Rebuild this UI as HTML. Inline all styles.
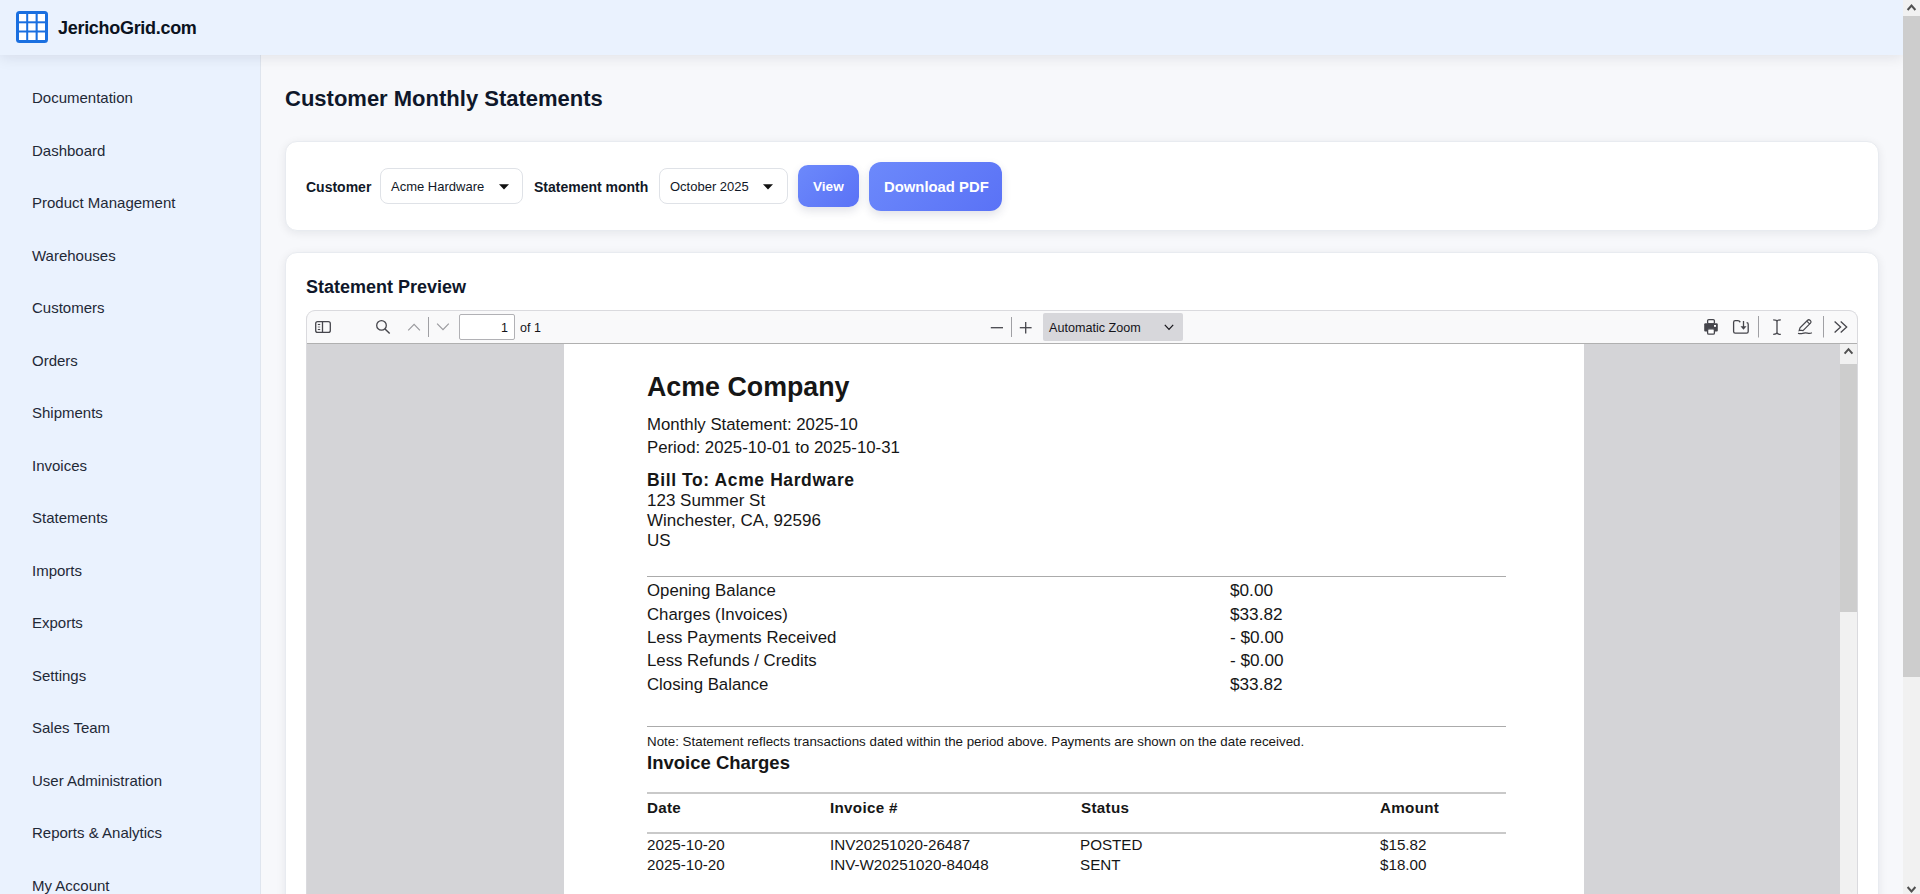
<!DOCTYPE html>
<html><head><meta charset="utf-8">
<style>
*{box-sizing:border-box;margin:0;padding:0}
html,body{width:1920px;height:894px;overflow:hidden}
body{font-family:"Liberation Sans",sans-serif;background:#f7f8fb;position:relative;color:#111827}
.a{position:absolute;white-space:nowrap;line-height:1}
#header{position:absolute;left:0;top:0;width:1903px;height:55px;background:#eaf2fe;z-index:5;box-shadow:0 2px 14px rgba(15,23,42,0.10)}
#sidebar{position:absolute;left:0;top:55px;width:261px;height:839px;background:#eaf2fe;border-right:1px solid #dfe5ee;z-index:2}
.nav{position:absolute;left:32px;font-size:15px;color:#1f2937;line-height:1}
#main{position:absolute;left:261px;top:55px;width:1642px;height:839px;overflow:hidden}
.card{position:absolute;background:#fff;border:1px solid #e8ebf0;border-radius:12px;box-shadow:0 2px 10px rgba(15,23,42,0.08)}
.lbl{font-weight:bold;font-size:14px;color:#111827}
.sel{position:absolute;border:1px solid #dfe2e7;border-radius:8px;background:#fff}
.tri{position:absolute;width:0;height:0;border-left:5px solid transparent;border-right:5px solid transparent;border-top:5px solid #111}
.btn{position:absolute;border-radius:10px;background:linear-gradient(135deg,#6c89fb,#5a72f6);box-shadow:0 4px 10px rgba(40,50,90,0.14)}
#sbar{position:absolute;left:1903px;top:0;width:17px;height:894px;background:#f1f1f1;z-index:10}
.pdf{color:#161616}
.rule{position:absolute;left:647px;width:859px;height:1px;background:#ababab}
</style></head><body>

<div id="header">
  <svg class="a" style="left:16px;top:11px" width="32" height="32" viewBox="0 0 32 32">
    <rect x="0" y="0" width="32" height="32" rx="3.5" fill="#1a6fe0"/>
    <g fill="#fff">
      <rect x="3" y="3" width="7.2" height="7.3"/><rect x="12.2" y="3" width="7.4" height="7.3"/><rect x="21.7" y="3" width="7.3" height="7.3"/>
      <rect x="3" y="12.3" width="7.2" height="7.2"/><rect x="12.2" y="12.3" width="7.4" height="7.2"/><rect x="21.7" y="12.3" width="7.3" height="7.2"/>
      <rect x="3" y="21.5" width="7.2" height="7.5"/><rect x="12.2" y="21.5" width="7.4" height="7.5"/><rect x="21.7" y="21.5" width="7.3" height="7.5"/>
    </g>
  </svg>
  <div class="a" style="left:58px;top:19px;font-size:18px;font-weight:bold;letter-spacing:-0.3px;color:#0b1220">JerichoGrid.com</div>
</div>

<div id="sidebar"></div>
<div class="a nav" style="top:90px;z-index:3">Documentation</div>
<div class="a nav" style="top:143px;z-index:3">Dashboard</div>
<div class="a nav" style="top:195px;z-index:3">Product Management</div>
<div class="a nav" style="top:248px;z-index:3">Warehouses</div>
<div class="a nav" style="top:300px;z-index:3">Customers</div>
<div class="a nav" style="top:353px;z-index:3">Orders</div>
<div class="a nav" style="top:405px;z-index:3">Shipments</div>
<div class="a nav" style="top:458px;z-index:3">Invoices</div>
<div class="a nav" style="top:510px;z-index:3">Statements</div>
<div class="a nav" style="top:563px;z-index:3">Imports</div>
<div class="a nav" style="top:615px;z-index:3">Exports</div>
<div class="a nav" style="top:668px;z-index:3">Settings</div>
<div class="a nav" style="top:720px;z-index:3">Sales Team</div>
<div class="a nav" style="top:773px;z-index:3">User Administration</div>
<div class="a nav" style="top:825px;z-index:3">Reports &amp; Analytics</div>
<div class="a nav" style="top:878px;z-index:3">My Account</div>

<!-- main title -->
<div class="a" style="left:285px;top:88px;font-size:22px;font-weight:bold;color:#0f172a">Customer Monthly Statements</div>

<!-- card 1 -->
<div class="card" style="left:285px;top:141px;width:1594px;height:90px"></div>
<div class="a lbl" style="left:306px;top:180px">Customer</div>
<div class="sel" style="left:380px;top:168px;width:143px;height:36px"></div>
<div class="a" style="left:391px;top:180px;font-size:13px;color:#111827">Acme Hardware</div>
<svg class="a" style="left:495px;top:180px" width="18" height="14" viewBox="495 180 18 14"><polygon points="499,184.2 509,184.2 504,189.6" fill="#111"/></svg>
<div class="a lbl" style="left:534px;top:180px">Statement month</div>
<div class="sel" style="left:659px;top:168px;width:129px;height:36px"></div>
<div class="a" style="left:670px;top:180px;font-size:13px;color:#111827">October 2025</div>
<svg class="a" style="left:759px;top:180px" width="18" height="14" viewBox="759 180 18 14"><polygon points="763,184.2 773,184.2 768,189.6" fill="#111"/></svg>
<div class="btn" style="left:798px;top:165px;width:61px;height:42px"></div>
<div class="a" style="left:813px;top:180px;font-size:13.6px;font-weight:bold;color:#fff">View</div>
<div class="btn" style="left:869px;top:162px;width:133px;height:49px;border-radius:12px"></div>
<div class="a" style="left:884px;top:180px;font-size:14.85px;font-weight:bold;color:#fff">Download PDF</div>

<!-- card 2 -->
<div class="card" style="left:285px;top:252px;width:1594px;height:700px"></div>
<div class="a" style="left:306px;top:278px;font-size:18px;font-weight:bold;color:#0f172a">Statement Preview</div>

<!-- pdf viewer -->
<div id="viewer" style="position:absolute;left:306px;top:310px;width:1552px;height:600px;border:1px solid #dadade;border-bottom:none;border-radius:9px 9px 0 0;overflow:hidden;background:#d4d4d7">
  <div style="position:absolute;left:0;top:0;width:100%;height:33px;background:#f9f9fa;border-bottom:1px solid #b0b0b0"></div>
  <div style="position:absolute;left:257px;top:33px;width:1020px;height:600px;background:#fff"></div>
  <div style="position:absolute;left:1533px;top:33px;width:17px;height:600px;background:#f1f1f1">
    <div style="position:absolute;left:0;top:20px;width:17px;height:248px;background:#cdcdcd"></div>
  </div>
</div>
<svg class="a" style="left:306px;top:310px;z-index:4" width="1552" height="60" viewBox="306 310 1552 60" fill="none" stroke="#46464c" stroke-width="1.3">
  <!-- sidebar toggle -->
  <rect x="315.7" y="321.6" width="14.6" height="10.8" rx="2"/>
  <line x1="322.5" y1="321.6" x2="322.5" y2="332.4"/>
  <line x1="317.8" y1="324.5" x2="320.2" y2="324.5" stroke-width="1.1"/>
  <line x1="317.8" y1="327" x2="320.2" y2="327" stroke-width="1.1" stroke="#8a8a8f"/>
  <line x1="317.8" y1="329.5" x2="320.2" y2="329.5" stroke-width="1.1"/>
  <!-- search -->
  <circle cx="381.5" cy="325.4" r="4.8"/>
  <line x1="385" y1="328.9" x2="389.7" y2="333.6" stroke-width="1.4"/>
  <!-- up/down -->
  <polyline points="408.2,330.3 414.1,324.4 419.9,330.3" stroke="#9a9a9e" stroke-width="1.2"/>
  <line x1="428.5" y1="317" x2="428.5" y2="337" stroke="#a0a0a4" stroke-width="1"/>
  <polyline points="437.1,323.7 443,329.6 448.8,323.7" stroke="#9a9a9e" stroke-width="1.2"/>
  <!-- zoom -->
  <line x1="990.8" y1="327.7" x2="1003" y2="327.7" stroke-width="1.3"/>
  <line x1="1011.5" y1="317" x2="1011.5" y2="337" stroke="#a0a0a4" stroke-width="1"/>
  <line x1="1019.8" y1="327.7" x2="1031.6" y2="327.7" stroke-width="1.3"/>
  <line x1="1025.7" y1="321.9" x2="1025.7" y2="333.6" stroke-width="1.3"/>
  <!-- right separators -->
  <line x1="1758.5" y1="316" x2="1758.5" y2="337.5" stroke="#a0a0a4" stroke-width="1"/>
  <line x1="1823.5" y1="316" x2="1823.5" y2="337.5" stroke="#a0a0a4" stroke-width="1"/>
  <!-- print -->
  <rect x="1707.6" y="319.6" width="6.8" height="4.2" rx="1.2"/>
  <path d="M1705.4 323.2 H1716.6 Q1717.8 323.2 1717.8 324.4 V330.6 Q1717.8 331.6 1716.8 331.6 H1705.2 Q1704.2 331.6 1704.2 330.6 V324.4 Q1704.2 323.2 1705.4 323.2 Z" fill="#46464c" stroke="none"/>
  <rect x="1714" y="325" width="2" height="1.8" fill="#fff" stroke="none"/>
  <rect x="1707.6" y="328.8" width="6.8" height="5.4" rx="1.2" fill="#fff"/>
  <!-- save -->
  <path d="M1740.3 322.2 L1739.2 321 Q1738.6 320.6 1737.8 320.6 H1735.2 Q1733.6 320.6 1733.6 322.2 V331.6 Q1733.6 333.2 1735.2 333.2 H1746.6 Q1748.2 333.2 1748.2 331.6 V324.2 Q1748.2 322.6 1746.6 322.6"/>
  <line x1="1743.5" y1="321" x2="1743.5" y2="327" stroke-width="1.3"/>
  <path d="M1740.5 326.3 H1746.5 L1743.5 329.8 Z" fill="#46464c" stroke="none"/>
  <!-- text select -->
  <path d="M1773.2 319.8 Q1777 319.8 1777 321.6 Q1777 319.8 1780.8 319.8 M1777 321.6 V332.6 M1773.2 334.4 Q1777 334.4 1777 332.6 Q1777 334.4 1780.8 334.4" stroke-width="1.3"/>
  <!-- pen -->
  <path d="M1800.2 330.2 L1799.2 330.6 L1800 327.8 L1807.6 320.3 Q1808.8 319.2 1810 320.3 L1810.6 320.9 Q1811.6 322 1810.5 323.1 L1803 330.6 Z M1806.8 321.1 L1809.8 324.1" stroke-width="1.2"/>
  <path d="M1798 333.2 Q1800 334 1802.5 333.4 Q1805 332.6 1807.5 333.2 Q1810 333.8 1811.9 332.8" stroke-width="1.2"/>
  <!-- >> -->
  <polyline points="1834.6,321.4 1840.6,327 1834.6,332.6" stroke-width="1.3"/>
  <polyline points="1840.7,321.4 1846.7,327 1840.7,332.6" stroke-width="1.3"/>
  <!-- inner scrollbar up arrow -->
  <polyline points="1844.6,353.6 1848.5,349.2 1852.4,353.6" stroke="#505050" stroke-width="2"/>
</svg>
<div class="a" style="left:459px;top:314px;width:56px;height:26px;background:#fff;border:1px solid #b1b1b5;border-radius:2px;z-index:4"></div>
<div class="a" style="left:501px;top:322px;font-size:12.5px;color:#15141a;z-index:5">1</div>
<div class="a" style="left:520px;top:322px;font-size:12.5px;color:#15141a;z-index:5">of 1</div>
<div class="a" style="left:1043px;top:313px;width:140px;height:28px;background:#d7d7db;border-radius:2px;z-index:4"></div>
<div class="a" style="left:1049px;top:322px;font-size:12.6px;color:#15141a;z-index:5">Automatic Zoom</div>
<svg class="a" style="left:1160px;top:320px;z-index:5" width="18" height="14" viewBox="1160 320 18 14" fill="none" stroke="#15141a" stroke-width="1.2"><polyline points="1164.8,324.8 1169,329.4 1173.2,324.8"/></svg>

<!-- pdf page content -->
<div class="pdf" style="position:absolute;left:0;top:0;z-index:4">
  <div class="a" style="left:647px;top:374px;font-size:26.8px;font-weight:bold">Acme Company</div>
  <div class="a" style="left:647px;top:417px;font-size:16.8px">Monthly Statement: 2025-10</div>
  <div class="a" style="left:647px;top:440px;font-size:16.8px">Period: 2025-10-01 to 2025-10-31</div>
  <div class="a" style="left:647px;top:472px;font-size:17.5px;font-weight:bold;letter-spacing:0.6px">Bill To: Acme Hardware</div>
  <div class="a" style="left:647px;top:492px;font-size:17px">123 Summer St</div>
  <div class="a" style="left:647px;top:512px;font-size:17px">Winchester, CA, 92596</div>
  <div class="a" style="left:647px;top:532px;font-size:17px">US</div>
  <div class="rule" style="top:576px"></div>
  <div class="a" style="left:647px;top:582.6px;font-size:16.8px">Opening Balance</div>
  <div class="a" style="left:1230px;top:582px;font-size:17.2px">$0.00</div>
  <div class="a" style="left:647px;top:607px;font-size:16.8px">Charges (Invoices)</div>
  <div class="a" style="left:1230px;top:606.4px;font-size:17.2px">$33.82</div>
  <div class="a" style="left:647px;top:630.4px;font-size:16.8px">Less Payments Received</div>
  <div class="a" style="left:1230px;top:629px;font-size:17.2px">- $0.00</div>
  <div class="a" style="left:647px;top:653.4px;font-size:16.8px">Less Refunds / Credits</div>
  <div class="a" style="left:1230px;top:652px;font-size:17.2px">- $0.00</div>
  <div class="a" style="left:647px;top:677px;font-size:16.8px">Closing Balance</div>
  <div class="a" style="left:1230px;top:676.4px;font-size:17.2px">$33.82</div>
  <div class="rule" style="top:726px"></div>
  <div class="a" style="left:647px;top:735px;font-size:13.35px">Note: Statement reflects transactions dated within the period above. Payments are shown on the date received.</div>
  <div class="a" style="left:647px;top:754px;font-size:18.5px;font-weight:bold">Invoice Charges</div>
  <div class="rule" style="top:792px;height:2px;background:#c9c9c9"></div>
  <div class="a" style="left:647px;top:800px;font-size:15.2px;font-weight:bold;letter-spacing:0.3px">Date</div>
  <div class="a" style="left:830px;top:800px;font-size:15.2px;font-weight:bold;letter-spacing:0.3px">Invoice #</div>
  <div class="a" style="left:1081px;top:800px;font-size:15.2px;font-weight:bold;letter-spacing:0.3px">Status</div>
  <div class="a" style="left:1380px;top:800px;font-size:15.2px;font-weight:bold;letter-spacing:0.3px">Amount</div>
  <div class="rule" style="top:832px;height:2px;background:#c9c9c9"></div>
  <div class="a" style="left:647px;top:837px;font-size:15.2px">2025-10-20</div>
  <div class="a" style="left:830px;top:837px;font-size:15.2px">INV20251020-26487</div>
  <div class="a" style="left:1080px;top:837px;font-size:15.2px">POSTED</div>
  <div class="a" style="left:1380px;top:837px;font-size:15.2px">$15.82</div>
  <div class="a" style="left:647px;top:857px;font-size:15.2px">2025-10-20</div>
  <div class="a" style="left:830px;top:857px;font-size:15.2px">INV-W20251020-84048</div>
  <div class="a" style="left:1080px;top:857px;font-size:15.2px">SENT</div>
  <div class="a" style="left:1380px;top:857px;font-size:15.2px">$18.00</div>
</div>

<!-- outer scrollbar -->
<div id="sbar">
  <div style="position:absolute;left:0;top:16px;width:17px;height:661px;background:#cdcdcd"></div>
  <svg style="position:absolute;left:0;top:0" width="17" height="894" viewBox="1903 0 17 894" fill="none" stroke="#505050" stroke-width="2"><polyline points="1907.6,10 1911.5,5.6 1915.4,10"/><polyline points="1907.6,887 1911.5,891.4 1915.4,887"/></svg>
</div>

</body></html>
